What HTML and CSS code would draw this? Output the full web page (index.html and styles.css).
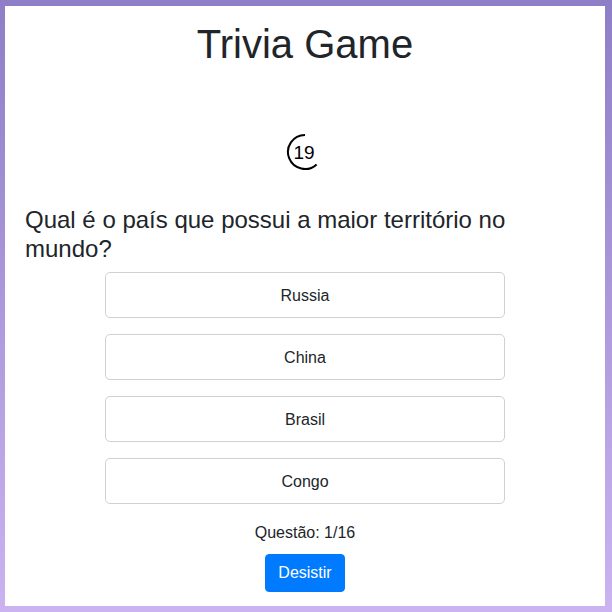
FILE: index.html
```html
<!DOCTYPE html>
<html lang="pt">
<head>
<meta charset="utf-8">
<title>Trivia Game</title>
<link rel="stylesheet" href="styles.css">
</head>
<body>
<main class="card">
  <h1 class="title">Trivia Game</h1>
  <div class="timer">
    <svg class="timer-ring" width="40" height="40" viewBox="0 0 40 40" aria-hidden="true">
      <path d="M20 3 A17 17 0 1 0 31.6 32.4" fill="none" stroke="#000" stroke-width="2"/>
    </svg>
    <span class="timer-value">19</span>
  </div>
  <h2 class="question">Qual é o país que possui a maior território no mundo?</h2>
  <div class="answers">
    <button class="answer">Russia</button>
    <button class="answer">China</button>
    <button class="answer">Brasil</button>
    <button class="answer">Congo</button>
  </div>
  <p class="progress">Questão: 1/16</p>
  <div class="actions">
    <button class="btn-quit">Desistir</button>
  </div>
</main>
</body>
</html>
```
FILE: styles.css
```css
* { box-sizing: border-box; }

html, body { margin: 0; }

body {
  height: 612px;
  padding: 6px 7px 6px 5px;
  background: linear-gradient(to bottom, #8e7ec7 0%, #a996d9 45%, #cbb3f1 100%);
  font-family: "Liberation Sans", Arial, sans-serif;
  color: #212529;
}

.card {
  background: #fff;
  height: 600px;
  padding: 0 20px;
  display: flex;
  flex-direction: column;
}

.title {
  margin: 14px 0 0;
  font-size: 40px;
  font-weight: 400;
  line-height: 48px;
  text-align: center;
}

.timer {
  margin-top: 64px;
  display: grid;
  place-items: center;
  height: 40px;
}

.timer-ring, .timer-value { grid-area: 1 / 1; }

.timer-value {
  font-size: 19px;
  line-height: 1;
  margin: 0 2px 0 0;
  color: #000;
}

.question {
  margin: 34px 0 0;
  font-size: 24px;
  font-weight: 400;
  line-height: 28.8px;
}

.answers {
  margin-top: 8px;
  display: flex;
  flex-direction: column;
  align-items: center;
  gap: 16px;
}

.answer {
  width: 400px;
  height: 46px;
  padding: 11px 12px 9px;
  background: #fff;
  border: 1px solid #d0d0d0;
  border-radius: 5px;
  font-family: inherit;
  font-size: 16px;
  line-height: 24px;
  color: #212529;
}

.progress {
  margin: 17px 0 0;
  font-size: 16px;
  line-height: 24px;
  text-align: center;
}

.actions {
  margin-top: 9px;
  display: flex;
  justify-content: center;
}

.btn-quit {
  padding: 6px 12px;
  background: #007bff;
  border: 1px solid #007bff;
  border-radius: 4px;
  color: #fff;
  font-family: inherit;
  font-size: 16px;
  line-height: 24px;
}
```
